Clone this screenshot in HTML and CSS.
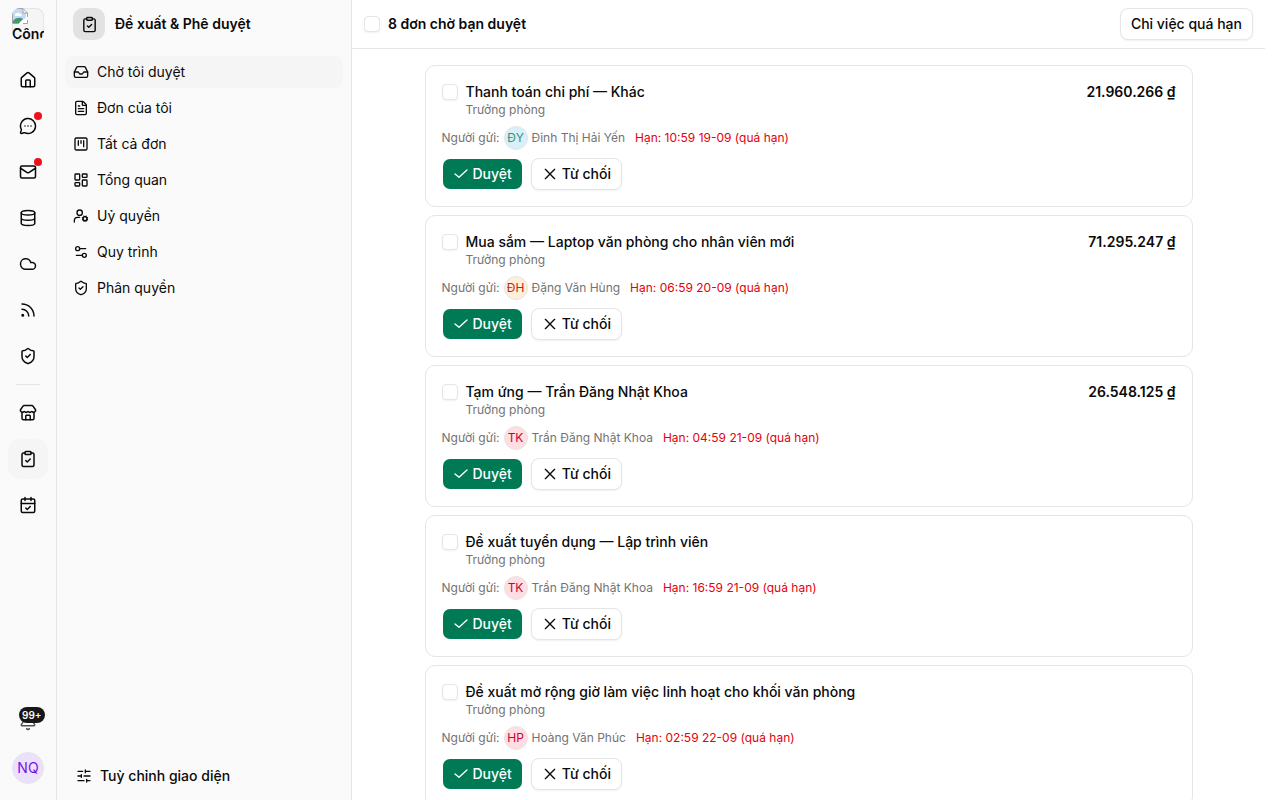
FILE: index.html
```html
<!DOCTYPE html>
<html lang="vi">

<head>
  <meta charset="UTF-8">
  <meta name="viewport" content="width=device-width, initial-scale=1.0">
  <title>Đề xuất &amp; Phê duyệt</title>
  <link rel="stylesheet" href="styles.css">
</head>

<body>
  <!-- icon sprite -->
  <svg class="sprite" aria-hidden="true">
    <symbol id="i-home" viewBox="0 0 24 24">
      <path d="M15 21v-8a1 1 0 0 0-1-1h-4a1 1 0 0 0-1 1v8" />
      <path d="M3 10a2 2 0 0 1 .709-1.528l7-6a2 2 0 0 1 2.582 0l7 6A2 2 0 0 1 21 10v9a2 2 0 0 1-2 2H5a2 2 0 0 1-2-2z" />
    </symbol>
    <symbol id="i-chat" viewBox="0 0 24 24">
      <path d="M2.992 16.342a2 2 0 0 1 .094 1.167l-1.065 3.29a1 1 0 0 0 1.236 1.168l3.413-.998a2 2 0 0 1 1.099.092 10 10 0 1 0-4.777-4.719" />
      <path d="M8 12h.01M12 12h.01M16 12h.01" />
    </symbol>
    <symbol id="i-mail" viewBox="0 0 24 24">
      <path d="m22 7-8.991 5.727a2 2 0 0 1-2.009 0L2 7" />
      <rect x="2" y="4" width="20" height="16" rx="2" />
    </symbol>
    <symbol id="i-database" viewBox="0 0 24 24">
      <ellipse cx="12" cy="5" rx="9" ry="3" />
      <path d="M3 5v14a9 3 0 0 0 18 0V5M3 12a9 3 0 0 0 18 0" />
    </symbol>
    <symbol id="i-cloud" viewBox="0 0 24 24">
      <path d="M17.5 19H9a7 7 0 1 1 6.71-9h1.79a4.5 4.5 0 1 1 0 9Z" />
    </symbol>
    <symbol id="i-rss" viewBox="0 0 24 24">
      <path d="M4 11a9 9 0 0 1 9 9M4 4a16 16 0 0 1 16 16" />
      <circle cx="5" cy="19" r="1" />
    </symbol>
    <symbol id="i-shield" viewBox="0 0 24 24">
      <path d="M20 13c0 5-3.5 7.5-7.66 8.95a1 1 0 0 1-.67-.01C7.5 20.5 4 18 4 13V6a1 1 0 0 1 1-1c2 0 4.5-1.2 6.24-2.72a1.17 1.17 0 0 1 1.52 0C14.51 3.81 17 5 19 5a1 1 0 0 1 1 1z" />
      <path d="m9 12 2 2 4-4" />
    </symbol>
    <symbol id="i-store" viewBox="0 0 24 24">
      <path d="M15 21v-5a1 1 0 0 0-1-1h-4a1 1 0 0 0-1 1v5" />
      <path d="M17.774 10.31a1.12 1.12 0 0 0-1.549 0 2.5 2.5 0 0 1-3.451 0 1.12 1.12 0 0 0-1.548 0 2.5 2.5 0 0 1-3.452 0 1.12 1.12 0 0 0-1.549 0 2.5 2.5 0 0 1-3.77-3.248l2.889-4.184A2 2 0 0 1 7 2h10a2 2 0 0 1 1.653.873l2.895 4.192a2.5 2.5 0 0 1-3.774 3.244" />
      <path d="M4 10.95V19a2 2 0 0 0 2 2h12a2 2 0 0 0 2-2v-8.05" />
    </symbol>
    <symbol id="i-clipboard" viewBox="0 0 24 24">
      <rect x="8" y="2" width="8" height="4" rx="1" />
      <path d="M16 4h2a2 2 0 0 1 2 2v14a2 2 0 0 1-2 2H6a2 2 0 0 1-2-2V6a2 2 0 0 1 2-2h2" />
      <path d="m9 14 2 2 4-4" />
    </symbol>
    <symbol id="i-calendar" viewBox="0 0 24 24">
      <path d="M8 2v4M16 2v4M3 10h18" />
      <rect x="3" y="4" width="18" height="18" rx="2" />
      <path d="m9 16 2 2 4-4" />
    </symbol>
    <symbol id="i-bell" viewBox="0 0 24 24">
      <path d="M10.268 21a2 2 0 0 0 3.464 0" />
      <path d="M3.262 15.326A1 1 0 0 0 4 17h16a1 1 0 0 0 .74-1.673C19.41 13.956 18 12.499 18 8A6 6 0 0 0 6 8c0 4.499-1.411 5.956-2.738 7.326" />
    </symbol>
    <symbol id="i-inbox" viewBox="0 0 24 24">
      <path d="M22 12h-6l-2 3h-4l-2-3H2" />
      <path d="M5.45 5.11 2 12v6a2 2 0 0 0 2 2h16a2 2 0 0 0 2-2v-6l-3.45-6.89A2 2 0 0 0 16.76 4H7.24a2 2 0 0 0-1.79 1.11z" />
    </symbol>
    <symbol id="i-file" viewBox="0 0 24 24">
      <path d="M6 22a2 2 0 0 1-2-2V4a2 2 0 0 1 2-2h8a2.4 2.4 0 0 1 1.704.706l3.588 3.588A2.4 2.4 0 0 1 20 8v12a2 2 0 0 1-2 2z" />
      <path d="M14 2v5a1 1 0 0 0 1 1h5M10 9H8M16 13H8M16 17H8" />
    </symbol>
    <symbol id="i-kanban" viewBox="0 0 24 24">
      <rect x="3" y="3" width="18" height="18" rx="2" />
      <path d="M8 7v7M12 7v4M16 7v9" />
    </symbol>
    <symbol id="i-dashboard" viewBox="0 0 24 24">
      <rect x="3" y="3" width="7" height="9" rx="1" />
      <rect x="14" y="3" width="7" height="5" rx="1" />
      <rect x="14" y="12" width="7" height="9" rx="1" />
      <rect x="3" y="16" width="7" height="5" rx="1" />
    </symbol>
    <symbol id="i-user-cog" viewBox="0 0 24 24">
      <circle cx="10" cy="7" r="4" />
      <path d="M2 21v-2a5 5 0 0 1 5-5h3" />
      <circle cx="18" cy="16" r="3" />
      <path d="m14.305 17.53.923-.382M15.228 14.852l-.923-.383M16.852 13.228l-.383-.923M16.852 18.772l-.383.924M19.148 13.228l.383-.923M19.53 19.696l-.382-.924M20.772 14.852l.924-.383M20.772 17.148l.924.383" />
    </symbol>
    <symbol id="i-settings" viewBox="0 0 24 24">
      <path d="M14 17H5M19 7h-9" />
      <circle cx="17" cy="17" r="3" />
      <circle cx="7" cy="7" r="3" />
    </symbol>
    <symbol id="i-sliders" viewBox="0 0 24 24">
      <path d="M10 5H3M12 19H3M14 3v4M16 17v4M21 12h-9M21 19h-5M21 5h-7M8 10v4M8 12H3" />
    </symbol>
    <symbol id="i-check" viewBox="0 0 24 24">
      <path d="M21 6 9 17l-6-5" />
    </symbol>
    <symbol id="i-x" viewBox="0 0 24 24">
      <path d="M19 5 5 19M5 5l14 14" />
    </symbol>
  </svg>

  <div class="app">
    <nav class="rail" aria-label="Ứng dụng">
      <a class="logo" href="#">
        <svg class="logo-img" viewBox="0 0 16 16" aria-hidden="true">
          <path d="M0 0h11l5 5v11H0z" fill="#fff" />
          <path d="M1 1h10v4h4v5L9 15H1z" fill="#c6d8f8" />
          <path d="M3 7a2 2 0 0 1 2-2 2 2 0 0 1 3 1 1 1 0 0 1 1 2H3z" fill="#fff" />
          <path d="M1 15v-2c3-4 7-4 10-2l-3 4z" fill="#3c9a6c" />
          <path d="M15 6v4l-7 5" stroke="#fff" stroke-width="2" fill="none" />
          <path d="M.5 15.5V.5H11L15.5 5v4M11 .5V5h4.5M.5 15.5H7M11 15.5h4.500V12" fill="none" stroke="#a3a3a3" />
        </svg>
        <span>Công</span>
      </a>
      <a class="rail-item" href="#" aria-label="Trang chủ"><svg class="icon"><use href="#i-home" /></svg></a>
      <a class="rail-item" href="#" aria-label="Tin nhắn"><svg class="icon"><use href="#i-chat" /></svg><span class="dot"></span></a>
      <a class="rail-item" href="#" aria-label="Thư"><svg class="icon"><use href="#i-mail" /></svg><span class="dot"></span></a>
      <a class="rail-item" href="#" aria-label="Dữ liệu"><svg class="icon"><use href="#i-database" /></svg></a>
      <a class="rail-item" href="#" aria-label="Lưu trữ"><svg class="icon"><use href="#i-cloud" /></svg></a>
      <a class="rail-item" href="#" aria-label="Bảng tin"><svg class="icon"><use href="#i-rss" /></svg></a>
      <a class="rail-item" href="#" aria-label="Quản trị"><svg class="icon"><use href="#i-shield" /></svg></a>
      <div class="rail-line"></div>
      <a class="rail-item" href="#" aria-label="Cửa hàng"><svg class="icon"><use href="#i-store" /></svg></a>
      <a class="rail-item active" href="#" aria-label="Phê duyệt"><svg class="icon"><use href="#i-clipboard" /></svg></a>
      <a class="rail-item" href="#" aria-label="Lịch"><svg class="icon"><use href="#i-calendar" /></svg></a>
      <div class="rail-bottom">
        <button class="bell" type="button" aria-label="Thông báo"><svg class="icon"><use href="#i-bell" /></svg><span class="count">99+</span></button>
        <button class="avatar me" type="button">NQ</button>
      </div>
    </nav>

    <aside class="sidebar">
      <div class="side-head">
        <span class="side-logo"><svg class="icon"><use href="#i-clipboard" /></svg></span>
        <h1>Đề xuất &amp; Phê duyệt</h1>
      </div>
      <nav class="menu" aria-label="Đề xuất &amp; Phê duyệt">
        <a class="menu-item active" href="#"><svg class="icon"><use href="#i-inbox" /></svg>Chờ tôi duyệt</a>
        <a class="menu-item" href="#"><svg class="icon"><use href="#i-file" /></svg>Đơn của tôi</a>
        <a class="menu-item" href="#"><svg class="icon"><use href="#i-kanban" /></svg>Tất cả đơn</a>
        <a class="menu-item" href="#"><svg class="icon"><use href="#i-dashboard" /></svg>Tổng quan</a>
        <a class="menu-item" href="#"><svg class="icon"><use href="#i-user-cog" /></svg>Uỷ quyền</a>
        <a class="menu-item" href="#"><svg class="icon"><use href="#i-settings" /></svg>Quy trình</a>
        <a class="menu-item" href="#"><svg class="icon"><use href="#i-shield" /></svg>Phân quyền</a>
      </nav>
      <button class="customize" type="button"><svg class="icon"><use href="#i-sliders" /></svg>Tuỳ chỉnh giao diện</button>
    </aside>

    <main class="main">
      <header class="topbar">
        <input class="check" type="checkbox" id="all">
        <label class="topbar-title" for="all">8 đơn chờ bạn duyệt</label>
        <button class="btn" type="button">Chỉ việc quá hạn</button>
      </header>

      <div class="list">
        <article class="card">
          <div class="card-head">
            <input class="check" type="checkbox" id="r1">
            <label class="card-title" for="r1">Thanh toán chi phí — Khác<small>Trưởng phòng</small></label>
            <span class="amount">21.960.266 ₫</span>
          </div>
          <div class="meta">Người gửi: <span class="avatar sky">ĐY</span><span>Đinh Thị Hải Yến</span><span class="due">Hạn: 10:59 19-09 (quá hạn)</span></div>
          <div class="actions">
            <button class="btn approve" type="button"><svg class="icon"><use href="#i-check" /></svg>Duyệt</button>
            <button class="btn" type="button"><svg class="icon"><use href="#i-x" /></svg>Từ chối</button>
          </div>
        </article>

        <article class="card">
          <div class="card-head">
            <input class="check" type="checkbox" id="r2">
            <label class="card-title" for="r2">Mua sắm — Laptop văn phòng cho nhân viên mới<small>Trưởng phòng</small></label>
            <span class="amount">71.295.247 ₫</span>
          </div>
          <div class="meta">Người gửi: <span class="avatar orange">ĐH</span><span>Đặng Văn Hùng</span><span class="due">Hạn: 06:59 20-09 (quá hạn)</span></div>
          <div class="actions">
            <button class="btn approve" type="button"><svg class="icon"><use href="#i-check" /></svg>Duyệt</button>
            <button class="btn" type="button"><svg class="icon"><use href="#i-x" /></svg>Từ chối</button>
          </div>
        </article>

        <article class="card">
          <div class="card-head">
            <input class="check" type="checkbox" id="r3">
            <label class="card-title" for="r3">Tạm ứng — Trần Đăng Nhật Khoa<small>Trưởng phòng</small></label>
            <span class="amount">26.548.125 ₫</span>
          </div>
          <div class="meta">Người gửi: <span class="avatar rose">TK</span><span>Trần Đăng Nhật Khoa</span><span class="due">Hạn: 04:59 21-09 (quá hạn)</span></div>
          <div class="actions">
            <button class="btn approve" type="button"><svg class="icon"><use href="#i-check" /></svg>Duyệt</button>
            <button class="btn" type="button"><svg class="icon"><use href="#i-x" /></svg>Từ chối</button>
          </div>
        </article>

        <article class="card">
          <div class="card-head">
            <input class="check" type="checkbox" id="r4">
            <label class="card-title" for="r4">Đề xuất tuyển dụng — Lập trình viên<small>Trưởng phòng</small></label>
          </div>
          <div class="meta">Người gửi: <span class="avatar rose">TK</span><span>Trần Đăng Nhật Khoa</span><span class="due">Hạn: 16:59 21-09 (quá hạn)</span></div>
          <div class="actions">
            <button class="btn approve" type="button"><svg class="icon"><use href="#i-check" /></svg>Duyệt</button>
            <button class="btn" type="button"><svg class="icon"><use href="#i-x" /></svg>Từ chối</button>
          </div>
        </article>

        <article class="card">
          <div class="card-head">
            <input class="check" type="checkbox" id="r5">
            <label class="card-title" for="r5">Đề xuất mở rộng giờ làm việc linh hoạt cho khối văn phòng<small>Trưởng phòng</small></label>
          </div>
          <div class="meta">Người gửi: <span class="avatar rose">HP</span><span>Hoàng Văn Phúc</span><span class="due">Hạn: 02:59 22-09 (quá hạn)</span></div>
          <div class="actions">
            <button class="btn approve" type="button"><svg class="icon"><use href="#i-check" /></svg>Duyệt</button>
            <button class="btn" type="button"><svg class="icon"><use href="#i-x" /></svg>Từ chối</button>
          </div>
        </article>
      </div>
    </main>
  </div>
</body>

</html>
```

FILE: styles.css
```css
* {
  box-sizing: border-box;
}

body {
  margin: 0;
  font-family: Inter, "Liberation Sans", sans-serif;
  font-size: 14px;
  line-height: 20px;
  color: #0a0a0a;
  background: #fff;
}

a {
  color: inherit;
  text-decoration: none;
}

button {
  font: inherit;
  color: inherit;
  cursor: pointer;
}

.sprite {
  display: none;
}

.icon {
  width: 16px;
  height: 16px;
  flex: none;
  fill: none;
  stroke: currentColor;
  stroke-width: 2;
  stroke-linecap: round;
  stroke-linejoin: round;
}

.app {
  display: flex;
  height: 100vh;
  overflow: hidden;
}

/* icon rail */
.rail {
  width: 57px;
  flex: none;
  display: flex;
  flex-direction: column;
  align-items: center;
  gap: 6px;
  padding: 8px 0 16px;
  background: #fafafa;
  border-right: 1px solid #e5e5e5;
}

.rail .icon {
  width: 18px;
  height: 18px;
}

.logo {
  width: 32px;
  height: 32px;
  margin-bottom: 14px;
  border-radius: 8px;
  background: #f5f5f5;
  box-shadow: inset 0 0 0 1px #e5e5e5;
  overflow: hidden;
  font-weight: 600;
  white-space: nowrap;
}

.logo-img {
  display: block;
  width: 16px;
  height: 16px;
}

.rail-item {
  position: relative;
  width: 40px;
  height: 40px;
  flex: none;
  display: flex;
  align-items: center;
  justify-content: center;
  border-radius: 12px;
}

.rail-item.active {
  background: #f5f5f5;
}

.dot {
  position: absolute;
  top: 6px;
  right: 6px;
  width: 8px;
  height: 8px;
  border-radius: 50%;
  background: #f0101c;
}

.rail-line {
  width: 24px;
  height: 1px;
  flex: none;
  margin: 2px 0;
  background: #e5e5e5;
}

.rail-bottom {
  margin-top: auto;
  display: flex;
  flex-direction: column;
  align-items: center;
  gap: 10px;
}

.bell {
  position: relative;
  width: 40px;
  height: 40px;
  padding: 0;
  display: flex;
  align-items: center;
  justify-content: center;
  border: 0;
  background: none;
}

.bell .icon {
  opacity: 0.7;
}

.count {
  position: absolute;
  top: 5px;
  left: 11px;
  height: 16px;
  padding: 0 3px;
  border-radius: 8px;
  background: #171717;
  color: #fafafa;
  font-size: 10px;
  font-weight: 600;
  line-height: 16px;
}

.avatar {
  width: 24px;
  height: 24px;
  flex: none;
  display: flex;
  align-items: center;
  justify-content: center;
  padding: 0;
  border: 1px solid #e5e5e5;
  border-radius: 50%;
}

.avatar.me {
  width: 32px;
  height: 32px;
  background: #ebe1fd;
  color: #7a10e8;
}

.avatar.sky {
  background: #d8f0fa;
  color: #2f9277;
}

.avatar.orange {
  background: #ffeed8;
  color: #c01c1c;
}

.avatar.rose {
  background: #ffdde2;
  color: #c70036;
}

/* section menu */
.sidebar {
  width: 295px;
  flex: none;
  display: flex;
  flex-direction: column;
  padding: 8px;
  background: #fafafa;
  border-right: 1px solid #e5e5e5;
}

.side-head {
  display: flex;
  align-items: center;
  gap: 10px;
  padding: 0 8px;
  margin-bottom: 16px;
}

.side-logo {
  width: 32px;
  height: 32px;
  display: flex;
  align-items: center;
  justify-content: center;
  border-radius: 10px;
  background: #e2e2e2;
}

.side-logo .icon {
  width: 17px;
  height: 17px;
}

h1 {
  margin: 0;
  font-size: 14px;
  font-weight: 600;
}

.menu {
  display: flex;
  flex-direction: column;
  gap: 4px;
}

.menu-item {
  height: 32px;
  display: flex;
  align-items: center;
  gap: 8px;
  padding: 0 8px;
  border-radius: 8px;
}

.menu-item.active {
  background: #f5f5f5;
}

.customize {
  height: 32px;
  margin-top: auto;
  display: flex;
  align-items: center;
  gap: 8px;
  padding: 0 11px;
  border: 0;
  background: none;
  font-weight: 500;
}

/* requests */
.main {
  flex: 1;
  min-width: 0;
  overflow: hidden;
  padding-right: 15px;
}

.topbar {
  height: 49px;
  display: flex;
  align-items: center;
  gap: 8px;
  padding: 0 12px;
  border-bottom: 1px solid #e5e5e5;
}

.topbar-title {
  flex: 1;
  font-weight: 600;
}

.check {
  appearance: none;
  width: 16px;
  height: 16px;
  flex: none;
  margin: 0;
  border: 1px solid #e5e5e5;
  border-radius: 4px;
  background: #fff;
  box-shadow: 0 1px 2px rgba(0, 0, 0, 0.06);
}

.check:checked {
  background: #007a55;
}

.btn {
  height: 32px;
  display: inline-flex;
  align-items: center;
  gap: 4px;
  padding: 0 10px;
  border: 1px solid #e5e5e5;
  border-radius: 8px;
  background: #fff;
  box-shadow: 0 1px 2px rgba(0, 0, 0, 0.06);
  font-weight: 500;
}

.btn.approve {
  border-color: transparent;
  background: #007a55;
  background-clip: padding-box;
  box-shadow: none;
  color: #fff;
}

.list {
  max-width: 800px;
  margin: 0 auto;
  padding: 16px;
  display: flex;
  flex-direction: column;
  gap: 8px;
}

.card {
  display: flex;
  flex-direction: column;
  gap: 8px;
  padding: 16px;
  border: 1px solid #e5e5e5;
  border-radius: 10px;
}

.card-head {
  display: flex;
  align-items: flex-start;
  gap: 8px;
}

.card-head .check {
  margin-top: 2px;
}

.card-title {
  flex: 1;
  font-weight: 500;
}

.card-title small {
  display: block;
  font-size: 12px;
  font-weight: 400;
  line-height: 16px;
  color: #737373;
}

.amount {
  font-weight: 600;
}

.meta {
  display: flex;
  align-items: center;
  gap: 4px;
  font-size: 12px;
  line-height: 16px;
  color: #737373;
}

.due {
  margin-left: 6px;
  color: #e7000b;
}

.actions {
  display: flex;
  gap: 8px;
}
```
